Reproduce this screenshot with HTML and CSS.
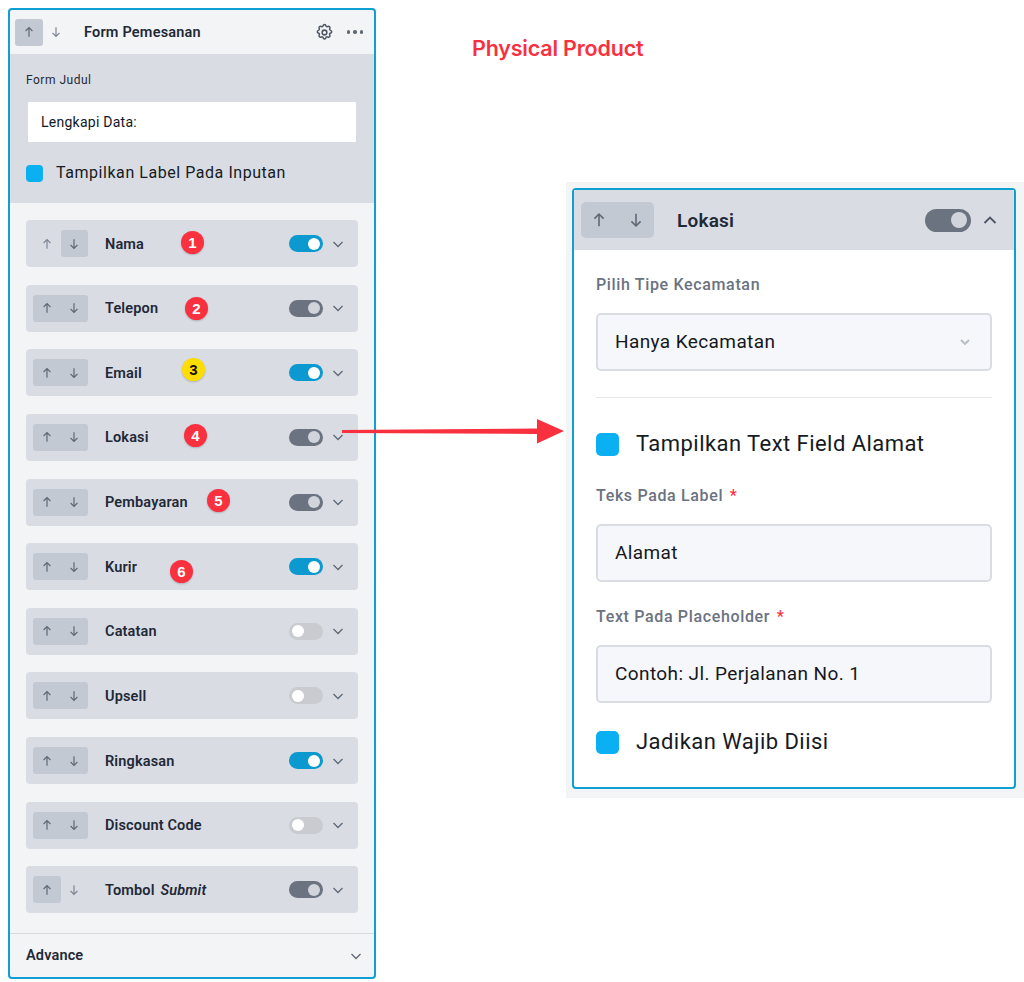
FILE: index.html
```html
<!DOCTYPE html>
<html lang="en">
<head>
  <meta charset="UTF-8">
  <title>Physical Product</title>
  <link rel="stylesheet" href="styles.css">
</head>
<body>
  <svg width="0" height="0" class="defs">
    <symbol id="up" viewBox="0 0 14 14"><path d="M7 12.500V2M3 5.800 7 1.800l4 4" fill="none" stroke="currentColor" stroke-width="1.400"/></symbol>
    <symbol id="down" viewBox="0 0 14 14"><path d="M7 1.500V12M3 8.200l4 4 4-4" fill="none" stroke="currentColor" stroke-width="1.400"/></symbol>
    <symbol id="chev" viewBox="0 0 12 12"><path d="M1.500 4 6 8.500 10.500 4" fill="none" stroke="currentColor" stroke-width="1.300"/></symbol>
  </svg>

  <div class="panel">
    <div class="panel-head">
      <div class="handle">
        <span class="arrow-btn on"><svg class="arr"><use href="#up"/></svg></span>
        <span class="arrow-btn faint"><svg class="arr"><use href="#down"/></svg></span>
      </div>
      <span class="panel-title">Form Pemesanan</span>
      <svg class="gear" viewBox="0 0 24 24" fill="none" stroke="#4b5563" stroke-width="1.900">
        <path d="M10.300 3.300c.4-1.800 3-1.800 3.400 0a1.700 1.700 0 0 0 2.600 1.100c1.500-.9 3.300.8 2.400 2.400a1.700 1.700 0 0 0 1 2.500c1.800.4 1.800 3 0 3.400a1.700 1.700 0 0 0-1 2.600c.9 1.500-.9 3.300-2.400 2.400a1.700 1.700 0 0 0-2.600 1c-.4 1.800-3 1.800-3.400 0a1.700 1.700 0 0 0-2.600-1c-1.500.9-3.300-.9-2.400-2.400a1.700 1.700 0 0 0-1-2.600c-1.800-.4-1.800-3 0-3.400a1.700 1.700 0 0 0 1-2.500c-.9-1.600.9-3.300 2.400-2.400a1.700 1.700 0 0 0 2.600-1.100z"/>
        <circle cx="12" cy="12" r="3"/>
      </svg>
      <span class="dots"><i></i><i></i><i></i></span>
    </div>

    <div class="title-box">
      <div class="small-label">Form Judul</div>
      <div class="title-input">Lengkapi Data:</div>
      <label class="check"><span class="box"></span>Tampilkan Label Pada Inputan</label>
    </div>

    <div class="rows">
      <div class="row">
        <div class="handle">
          <span class="arrow-btn faint"><svg class="arr"><use href="#up"/></svg></span>
          <span class="arrow-btn on"><svg class="arr"><use href="#down"/></svg></span>
        </div>
        <span class="row-name">Nama</span>
        <span class="toggle blue"></span>
        <svg class="chev"><use href="#chev"/></svg>
      </div>
      <div class="row">
        <div class="handle both"><span class="arrow-btn"><svg class="arr"><use href="#up"/></svg></span><span class="arrow-btn"><svg class="arr"><use href="#down"/></svg></span></div>
        <span class="row-name">Telepon</span>
        <span class="toggle grey"></span>
        <svg class="chev"><use href="#chev"/></svg>
      </div>
      <div class="row">
        <div class="handle both"><span class="arrow-btn"><svg class="arr"><use href="#up"/></svg></span><span class="arrow-btn"><svg class="arr"><use href="#down"/></svg></span></div>
        <span class="row-name">Email</span>
        <span class="toggle blue"></span>
        <svg class="chev"><use href="#chev"/></svg>
      </div>
      <div class="row">
        <div class="handle both"><span class="arrow-btn"><svg class="arr"><use href="#up"/></svg></span><span class="arrow-btn"><svg class="arr"><use href="#down"/></svg></span></div>
        <span class="row-name">Lokasi</span>
        <span class="toggle grey"></span>
        <svg class="chev"><use href="#chev"/></svg>
      </div>
      <div class="row">
        <div class="handle both"><span class="arrow-btn"><svg class="arr"><use href="#up"/></svg></span><span class="arrow-btn"><svg class="arr"><use href="#down"/></svg></span></div>
        <span class="row-name">Pembayaran</span>
        <span class="toggle grey"></span>
        <svg class="chev"><use href="#chev"/></svg>
      </div>
      <div class="row">
        <div class="handle both"><span class="arrow-btn"><svg class="arr"><use href="#up"/></svg></span><span class="arrow-btn"><svg class="arr"><use href="#down"/></svg></span></div>
        <span class="row-name">Kurir</span>
        <span class="toggle blue"></span>
        <svg class="chev"><use href="#chev"/></svg>
      </div>
      <div class="row">
        <div class="handle both"><span class="arrow-btn"><svg class="arr"><use href="#up"/></svg></span><span class="arrow-btn"><svg class="arr"><use href="#down"/></svg></span></div>
        <span class="row-name">Catatan</span>
        <span class="toggle off"></span>
        <svg class="chev"><use href="#chev"/></svg>
      </div>
      <div class="row">
        <div class="handle both"><span class="arrow-btn"><svg class="arr"><use href="#up"/></svg></span><span class="arrow-btn"><svg class="arr"><use href="#down"/></svg></span></div>
        <span class="row-name">Upsell</span>
        <span class="toggle off"></span>
        <svg class="chev"><use href="#chev"/></svg>
      </div>
      <div class="row">
        <div class="handle both"><span class="arrow-btn"><svg class="arr"><use href="#up"/></svg></span><span class="arrow-btn"><svg class="arr"><use href="#down"/></svg></span></div>
        <span class="row-name">Ringkasan</span>
        <span class="toggle blue"></span>
        <svg class="chev"><use href="#chev"/></svg>
      </div>
      <div class="row">
        <div class="handle both"><span class="arrow-btn"><svg class="arr"><use href="#up"/></svg></span><span class="arrow-btn"><svg class="arr"><use href="#down"/></svg></span></div>
        <span class="row-name">Discount Code</span>
        <span class="toggle off"></span>
        <svg class="chev"><use href="#chev"/></svg>
      </div>
      <div class="row">
        <div class="handle">
          <span class="arrow-btn on"><svg class="arr"><use href="#up"/></svg></span>
          <span class="arrow-btn faint"><svg class="arr"><use href="#down"/></svg></span>
        </div>
        <span class="row-name">Tombol <em>Submit</em></span>
        <span class="toggle grey"></span>
        <svg class="chev"><use href="#chev"/></svg>
      </div>
    </div>

    <div class="advance">
      <span>Advance</span>
      <svg class="chev"><use href="#chev"/></svg>
    </div>
  </div>

  <div class="side">
    <h1 class="side-title">Physical Product</h1>
    <div class="detail-wrap">
      <div class="detail">
        <div class="detail-head">
          <div class="handle big">
            <span class="arrow-btn"><svg class="arr"><use href="#up"/></svg></span>
            <span class="arrow-btn"><svg class="arr"><use href="#down"/></svg></span>
          </div>
          <span class="detail-title">Lokasi</span>
          <span class="toggle grey large"></span>
          <svg class="chev-up" viewBox="0 0 16 16"><path d="M2.500 11 8 5.500 13.500 11" fill="none" stroke="#4b5563" stroke-width="1.800"/></svg>
        </div>
        <div class="detail-body">
          <div class="field-label">Pilih Tipe Kecamatan</div>
          <div class="field select">
            <span>Hanya Kecamatan</span>
            <svg class="select-chev" viewBox="0 0 12 12"><path d="M2 4l4 4 4-4" fill="none" stroke="#b6bcc6" stroke-width="1.800"/></svg>
          </div>
          <hr class="divider">
          <label class="check large"><span class="box"></span>Tampilkan Text Field Alamat</label>
          <div class="field-label req-first">Teks Pada Label <b>*</b></div>
          <div class="field">Alamat</div>
          <div class="field-label req-next">Text Pada Placeholder <b>*</b></div>
          <div class="field">Contoh: Jl. Perjalanan No. 1</div>
          <label class="check large last"><span class="box"></span>Jadikan Wajib Diisi</label>
        </div>
      </div>
    </div>
  </div>

  <!-- annotations drawn over the screenshot -->
  <span class="pin red p1">1</span>
  <span class="pin red p2">2</span>
  <span class="pin yellow p3">3</span>
  <span class="pin red p4">4</span>
  <span class="pin red p5">5</span>
  <span class="pin red p6">6</span>
  <svg class="pointer" viewBox="0 0 222 26"><path d="M0 11 195 9.500V0L222 12 195 24.500V15L0 14z" fill="#f9313f"/></svg>
</body>
</html>
```

FILE: styles.css
```css
* {
  box-sizing: border-box;
}
html, body {
  margin: 0;
  padding: 0;
}
body {
  position: relative;
  width: 1024px;
  height: 982px;
  overflow: hidden;
  display: flex;
  align-items: flex-start;
  background: #fff;
  font-family: Roboto, "Liberation Sans", sans-serif;
  color: #1f2937;
}
.defs {
  position: absolute;
}

/* left panel */
.panel {
  width: 368px;
  height: 971px;
  margin: 8px 0 0 8px;
  flex: none;
  display: flex;
  flex-direction: column;
  background: #f3f4f6;
  border: 2px solid #0e9fd3;
  border-radius: 4px;
}
.panel-head {
  height: 44px;
  flex: none;
  display: flex;
  align-items: center;
  padding: 0 11px 0 5px;
}
.panel-title {
  margin-left: 14px;
  font-size: 14.500px;
  font-weight: 600;
  letter-spacing: .2px;
  flex: 1;
}
.gear {
  width: 19px;
  height: 19px;
  margin-right: 13px;
}
.dots {
  display: flex;
  gap: 3px;
}
.dots i {
  width: 3.500px;
  height: 3.500px;
  border-radius: 50%;
  background: #5f6876;
}
.handle {
  display: flex;
  flex: none;
  border-radius: 3px;
}
.handle.both {
  background: #c3c9d3;
}
.arrow-btn {
  width: 27.500px;
  height: 27px;
  display: flex;
  align-items: center;
  justify-content: center;
  color: #5f6876;
}
.arrow-btn.on {
  background: #c3c9d3;
  border-radius: 3px;
}
.arrow-btn.faint {
  color: #7f8794;
}
.arr {
  width: 12px;
  height: 12px;
}
.title-box {
  height: 149px;
  flex: none;
  padding: 18px 18px 0 16px;
  background: #d9dce3;
}
.small-label {
  font-size: 12px;
  line-height: 16px;
  letter-spacing: .5px;
}
.title-input {
  height: 40px;
  margin: 14px 0 0 2px;
  padding-left: 13px;
  background: #fff;
  border-radius: 1px;
  font-size: 14px;
  line-height: 40px;
  letter-spacing: .25px;
  color: #111827;
}
.check {
  display: flex;
  align-items: center;
  margin-top: 20px;
  font-size: 16px;
  letter-spacing: .55px;
  line-height: 22px;
  color: #161a22;
}
.box {
  width: 17px;
  height: 17px;
  margin-right: 13px;
  background: #0bb0f3;
  border-radius: 4px;
  flex: none;
}
.rows {
  flex: 1;
  display: flex;
  flex-direction: column;
  gap: 17.650px;
  padding: 17px 16px 0 16px;
}
.row {
  height: 47px;
  flex: none;
  display: flex;
  align-items: center;
  padding: 0 14px 0 7px;
  background: #d9dce3;
  border-radius: 4px;
}
.row-name {
  flex: 1;
  margin-left: 17px;
  padding-top: 1px;
  font-size: 14.500px;
  font-weight: 600;
  letter-spacing: .15px;
}
.row-name em {
  margin-left: 2px;
}
.toggle {
  position: relative;
  width: 34px;
  height: 17px;
  margin-right: 9px;
  border-radius: 9px;
  flex: none;
}
.toggle::after {
  content: "";
  position: absolute;
  top: 2.500px;
  right: 3px;
  width: 12px;
  height: 12px;
  border-radius: 50%;
}
.toggle.blue {
  background: #0c99d0;
}
.toggle.blue::after {
  background: #fff;
}
.toggle.grey {
  background: #6b7280;
}
.toggle.grey::after {
  background: #d1d5db;
}
.toggle.off {
  background: #c9cbd0;
}
.toggle.off::after {
  left: 3px;
  background: #fff;
}
.chev {
  width: 12px;
  height: 12px;
  color: #5f6876;
  flex: none;
}
.advance {
  height: 44px;
  flex: none;
  display: flex;
  align-items: center;
  justify-content: space-between;
  padding: 0 12px 0 16px;
  border-top: 1px solid #d5d9e0;
  font-size: 14.500px;
  font-weight: 600;
  letter-spacing: .15px;
}

/* right column */
.side {
  flex: 1;
  margin-left: 190px;
}
.side-title {
  margin: 36px 0 0 -94px;
  height: 24px;
  font-family: Inter, Roboto, sans-serif;
  font-size: 21.500px;
  line-height: 24px;
  font-weight: 600;
  letter-spacing: -.2px;
  color: #f9313f;
}
.detail-wrap {
  margin-top: 122px;
  height: 616px;
  padding: 6px 8px 0 6px;
  background: #f3f4f6;
}
.detail {
  height: 601px;
  background: #fff;
  border: 2px solid #0e9fd3;
  border-radius: 4px;
}
.detail-head {
  height: 60px;
  display: flex;
  align-items: center;
  padding: 0 16px 0 7px;
  background: #d9dce3;
}
.handle.big {
  background: #c3c9d3;
  border-radius: 5px;
}
.handle.big .arrow-btn {
  width: 36.500px;
  height: 36px;
}
.handle.big .arr {
  width: 16px;
  height: 16px;
}
.detail-title {
  flex: 1;
  margin-left: 23px;
  font-size: 19px;
  font-weight: 600;
  letter-spacing: .2px;
}
.toggle.large {
  width: 46px;
  height: 23px;
  margin-right: 11px;
  border-radius: 12px;
}
.toggle.large::after {
  top: 3.500px;
  right: 4px;
  width: 16px;
  height: 16px;
}
.chev-up {
  width: 16px;
  height: 16px;
}
.detail-body {
  padding: 25px 22px 0 22px;
}
.field-label {
  font-size: 16px;
  line-height: 20px;
  font-weight: 500;
  letter-spacing: .65px;
  color: #6b7280;
}
.field-label b {
  font-weight: 500;
  color: #f9313f;
  margin-left: 2px;
}
.field {
  height: 58px;
  margin-top: 18px;
  padding: 0 18px 2px 17px;
  display: flex;
  align-items: center;
  justify-content: space-between;
  background: #f5f7fa;
  border: 2px solid #d9dce3;
  border-radius: 5px;
  font-size: 19px;
  letter-spacing: .4px;
  color: #15171c;
}
.select-chev {
  width: 12px;
  height: 12px;
  margin-right: 1px;
  margin-top: 2px;
}
.divider {
  height: 1px;
  margin: 26px 0 0;
  border: 0;
  background: #e5e7eb;
}
.check.large {
  margin-top: 32px;
  font-size: 22px;
  line-height: 28px;
  letter-spacing: .45px;
}
.check.large .box {
  width: 23px;
  height: 23px;
  margin-right: 17px;
  border-radius: 5px;
}
.check.large.last {
  margin-top: 25px;
}
.req-first {
  margin-top: 28px;
}
.req-next {
  margin-top: 25px;
}

/* annotations */
.pin {
  position: absolute;
  width: 23px;
  height: 23px;
  display: flex;
  align-items: center;
  justify-content: center;
  border-radius: 50%;
  font-family: "Liberation Sans", sans-serif;
  font-size: 15px;
  font-weight: 700;
  box-shadow: 0 1px 2px rgba(0,0,0,.2);
}
.pin.red {
  background: #f9313f;
  color: #fff;
}
.pin.yellow {
  background: #ffdd00;
  color: #111;
}
.p1 { left: 181px; top: 231px; }
.p2 { left: 185px; top: 297px; }
.p3 { left: 182px; top: 358px; }
.p4 { left: 184px; top: 424px; }
.p5 { left: 207px; top: 489px; }
.p6 { left: 170px; top: 560px; }
.pointer {
  position: absolute;
  left: 342px;
  top: 419px;
  width: 222px;
  height: 26px;
}
```
